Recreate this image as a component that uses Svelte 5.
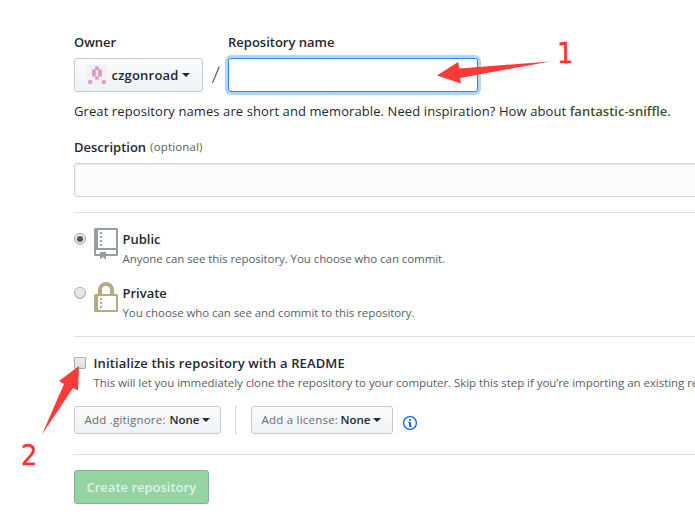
<script>
  let name = $state('');
  let description = $state('');
</script>

<main>
  <div class="labels"><span class="owner b">Owner</span><span class="b">Repository name</span></div>
  <div class="fields">
    <button class="btn pick">
      <svg class="avatar" width="20" height="20" viewBox="0 0 20 20">
        <rect width="20" height="20" fill="#f0f0f0" />
        <path fill="#e290c8" d="M8.200 1.500h3.600v3h3v7h-3v3H8.200v-3h-3v-7h3zM8.700 5v6.500h2.600V5zM1.300 15.300h3.700v3.500H1.300zM15 15.300h3.700v3.500H15z" fill-rule="evenodd" />
      </svg>
      <span class="user">czgonroad</span><i class="caret"></i>
    </button>
    <span class="slash"><svg width="10" height="20" viewBox="0 0 10 20"><path d="M8.300 1.500L1.500 18" stroke="#6a6670" stroke-width="1.300" fill="none" /></svg></span>
    <input class="name" bind:value={name} aria-label="Repository name" />
  </div>
  <p class="hint"><span class="lead">Great repository names are short and memorable. Need inspiration? How about</span>{' '}<strong>fantastic-sniffle</strong>.</p>
  <div class="desc"><span class="b">Description</span><span class="opt">(optional)</span></div>
  <input class="description" bind:value={description} aria-label="Description" />
  <section class="visibility">
    <div class="choice">
      <i class="radio on"></i>
      <svg width="24" height="32" viewBox="0 0 24 32" fill="#959da5"><path fill-rule="evenodd" d="M1.500 0h21A1.500 1.500 0 0 1 24 1.500v25a1.500 1.500 0 0 1-1.500 1.500H12v3.500l-3-2.500-3 2.500V28H1.500A1.500 1.500 0 0 1 0 26.500v-25A1.500 1.500 0 0 1 1.500 0zM4 2v18h18V2zM2 22v4h4v-2h6v2h10v-4z" /><path d="M6 4h2v2H6zM6 8h2v2H6zM6 12h2v2H6zM6 16h2v2H6z" /></svg>
      <div class="copy"><div class="b">Public</div><div class="note">Anyone can see this repository. You choose who can commit.</div></div>
    </div>
    <div class="choice">
      <i class="radio"></i>
      <svg width="24" height="32" viewBox="0 0 24 32" fill="#b9a980"><path fill-rule="evenodd" d="M4 12V8a8 8 0 0 1 16 0v4h2.500a1.500 1.500 0 0 1 1.500 1.500v15a1.500 1.500 0 0 1-1.500 1.500h-21A1.500 1.500 0 0 1 0 28.500v-15A1.500 1.500 0 0 1 1.500 12zM8 12h8V8a4 4 0 0 0-8 0zM4 14v14h18V14z" /><path d="M6 16h2v2H6zM6 20h2v2H6zM6 24h2v2H6z" /></svg>
      <div class="copy"><div class="b">Private</div><div class="note">You choose who can see and commit to this repository.</div></div>
    </div>
  </section>
  <section class="init">
    <div class="choice">
      <i class="check"></i>
      <div class="copy"><div class="b ini">Initialize this repository with a README</div><div class="note long">This will let you immediately clone the repository to your computer. Skip this step if you’re importing an existing re</div></div>
    </div>
    <div class="menus">
      <button class="btn small ig"><span class="key k1">Add .gitignore:</span><span class="val">None</span><i class="caret"></i></button>
      <i class="divider"></i>
      <button class="btn small li"><span class="key k2">Add a license:</span><span class="val">None</span><i class="caret"></i></button>
      <svg class="info" width="14" height="16" viewBox="0 0 14 16"><path fill="#0366d6" fill-rule="evenodd" d="M6.300 5.690a.942.942 0 0 1-.280-.700c0-.280.090-.520.280-.700.190-.180.420-.280.700-.280.280 0 .520.090.700.280.180.190.280.420.280.700 0 .280-.090.520-.280.700a1 1 0 0 1-.700.300c-.280 0-.520-.110-.700-.300zM8 7.990c-.020-.250-.110-.480-.310-.690-.200-.190-.420-.300-.690-.310H6c-.270.020-.480.130-.690.310-.200.200-.300.440-.310.690h1v3c.020.270.110.500.310.690.200.200.420.310.690.310h1c.270 0 .480-.110.690-.310.200-.190.300-.420.310-.690H8V7.980v.010zM7 2.300c-3.140 0-5.700 2.540-5.700 5.680 0 3.140 2.560 5.700 5.700 5.700s5.700-2.550 5.700-5.700c0-3.150-2.560-5.690-5.700-5.690v.010zM7 .980c3.860 0 7 3.140 7 7s-3.140 7-7 7-7-3.120-7-7 3.140-7 7-7z" /></svg>
    </div>
  </section>
  <section class="submit"><button class="create">Create repository</button></section>

  <svg class="arrows" width="695" height="524" viewBox="0 0 695 524" fill="#fc3a38">
    <path d="M437 75.500L458 62l1.500 6.500L550 61.500 460 78l1 5.500z" />
    <path d="M79 366L59 381l5 3L42 434.500 73 388l5 2.500z" />
  </svg>
  <span class="mark one">1</span>
  <span class="mark two">2</span>
</main>

<style>
  :global(body) { background: #fff; overflow: hidden; }
  main { position: relative; box-sizing: border-box; width: 695px; height: 524px; overflow: hidden; padding: 32px 0 0 74px; display: flex; flex-direction: column; font: 13px/20px "Open Sans", "Noto Sans", sans-serif; color: #24292e; white-space: nowrap; }
  button, input { font: inherit; color: inherit; box-sizing: border-box; margin: 0; outline: none; }
  .b { font-weight: 600; }
  .labels { display: flex; height: 26px; }
  .owner { width: 154px; }
  .fields { display: flex; height: 34px; }
  .btn { display: flex; align-items: center; border: 1px solid #c5c9cd; border-radius: 3px; background: linear-gradient(#fafbfc, #eff3f6); font-weight: 600; padding: 0; }
  .pick { width: 129px; padding-left: 12px; }
  .avatar { margin-right: 4.500px; }
  .caret { border: 4px solid transparent; border-top-color: #24292e; border-bottom: 0; }
  .user { width: 70px; text-align: left; letter-spacing: .2px; }
  .slash { display: flex; width: 25px; align-items: center; justify-content: center; }
  .name { width: 250px; border: 1px solid #2188ff; border-radius: 3px; background: #fff; box-shadow: 0 0 0 3px #b5d5f7; }
  .hint { margin: 9px 0 16px; height: 20px; }
  .lead { letter-spacing: .095px; }
  strong { font-weight: 600; color: #3b5526; }
  .desc { height: 26px; display: flex; gap: 4px; }
  .opt { font-size: 11.500px; color: #586069; letter-spacing: .15px; }
  .description { height: 34px; width: 650px; flex: none; border: 1px solid #d1d5da; border-radius: 3px; background: #fafbfc; box-shadow: inset 0 1px 2px rgba(27, 31, 35, .075); }
  .visibility { margin-top: 15px; border-top: 1px solid #dfe2e5; padding-top: 15px; height: 108px; }
  .choice { display: flex; height: 54px; }
  .radio { flex: none; box-sizing: border-box; width: 12px; height: 12px; margin: 5px 8px 0 0; border: 1px solid #a5a5a5; border-radius: 50%; background: linear-gradient(#eee, #ddd); display: flex; align-items: center; justify-content: center; }
  .on::after { content: ""; width: 6px; height: 6px; border-radius: 50%; background: #555; }
  .choice svg { flex: none; margin-right: 4.500px; }
  .copy { margin-top: 1px; }
  .note { font-size: 11.500px; color: #586069; letter-spacing: -.07px; }
  .long { letter-spacing: -.05px; }
  .init { border-top: 1px solid #dfe2e5; padding-top: 15px; }
  .ini { letter-spacing: .13px; }
  .check { flex: none; box-sizing: border-box; width: 12px; height: 12px; margin: 5px 7.500px 0 0; border: 1px solid #aaa; border-radius: 1px; background: linear-gradient(#eee, #ddd); }
  .menus { display: flex; height: 28px; }
  .small { height: 28px; font-size: 11.500px; padding-left: 9.500px; }
  .ig { width: 147px; }
  .li { width: 142px; }
  .key { color: #666c72; font-weight: 400; letter-spacing: .22px; text-align: left; }
  .k1 { width: 85px; }
  .k2 { width: 79px; }
  .val { width: 32.500px; text-align: left; }
  .divider { width: 1px; background: #d1d5da; margin: 0 15px 0 14px; }
  .info { margin: 9px 0 0 10px; }
  .submit { margin-top: 20px; border-top: 1px solid #dfe2e5; padding-top: 15px; }
  .create { display: block; width: 135px; height: 34px; padding: 0 0 0 11.500px; text-align: left; border: 1px solid #7fb68c; border-radius: 3px; background: #94d3a2; color: #dff2e3; font-weight: 600; }
  .arrows { position: absolute; left: 0; top: 0; pointer-events: none; }
  .mark { position: absolute; font: 28.500px/30px "DejaVu Sans Condensed", "DejaVu Sans", sans-serif; font-stretch: condensed; color: #fc2f2f; -webkit-text-stroke: .4px #fc2f2f; }
  .one { left: 557px; top: 39px; }
  .two { left: 21px; top: 441px; }
</style>
